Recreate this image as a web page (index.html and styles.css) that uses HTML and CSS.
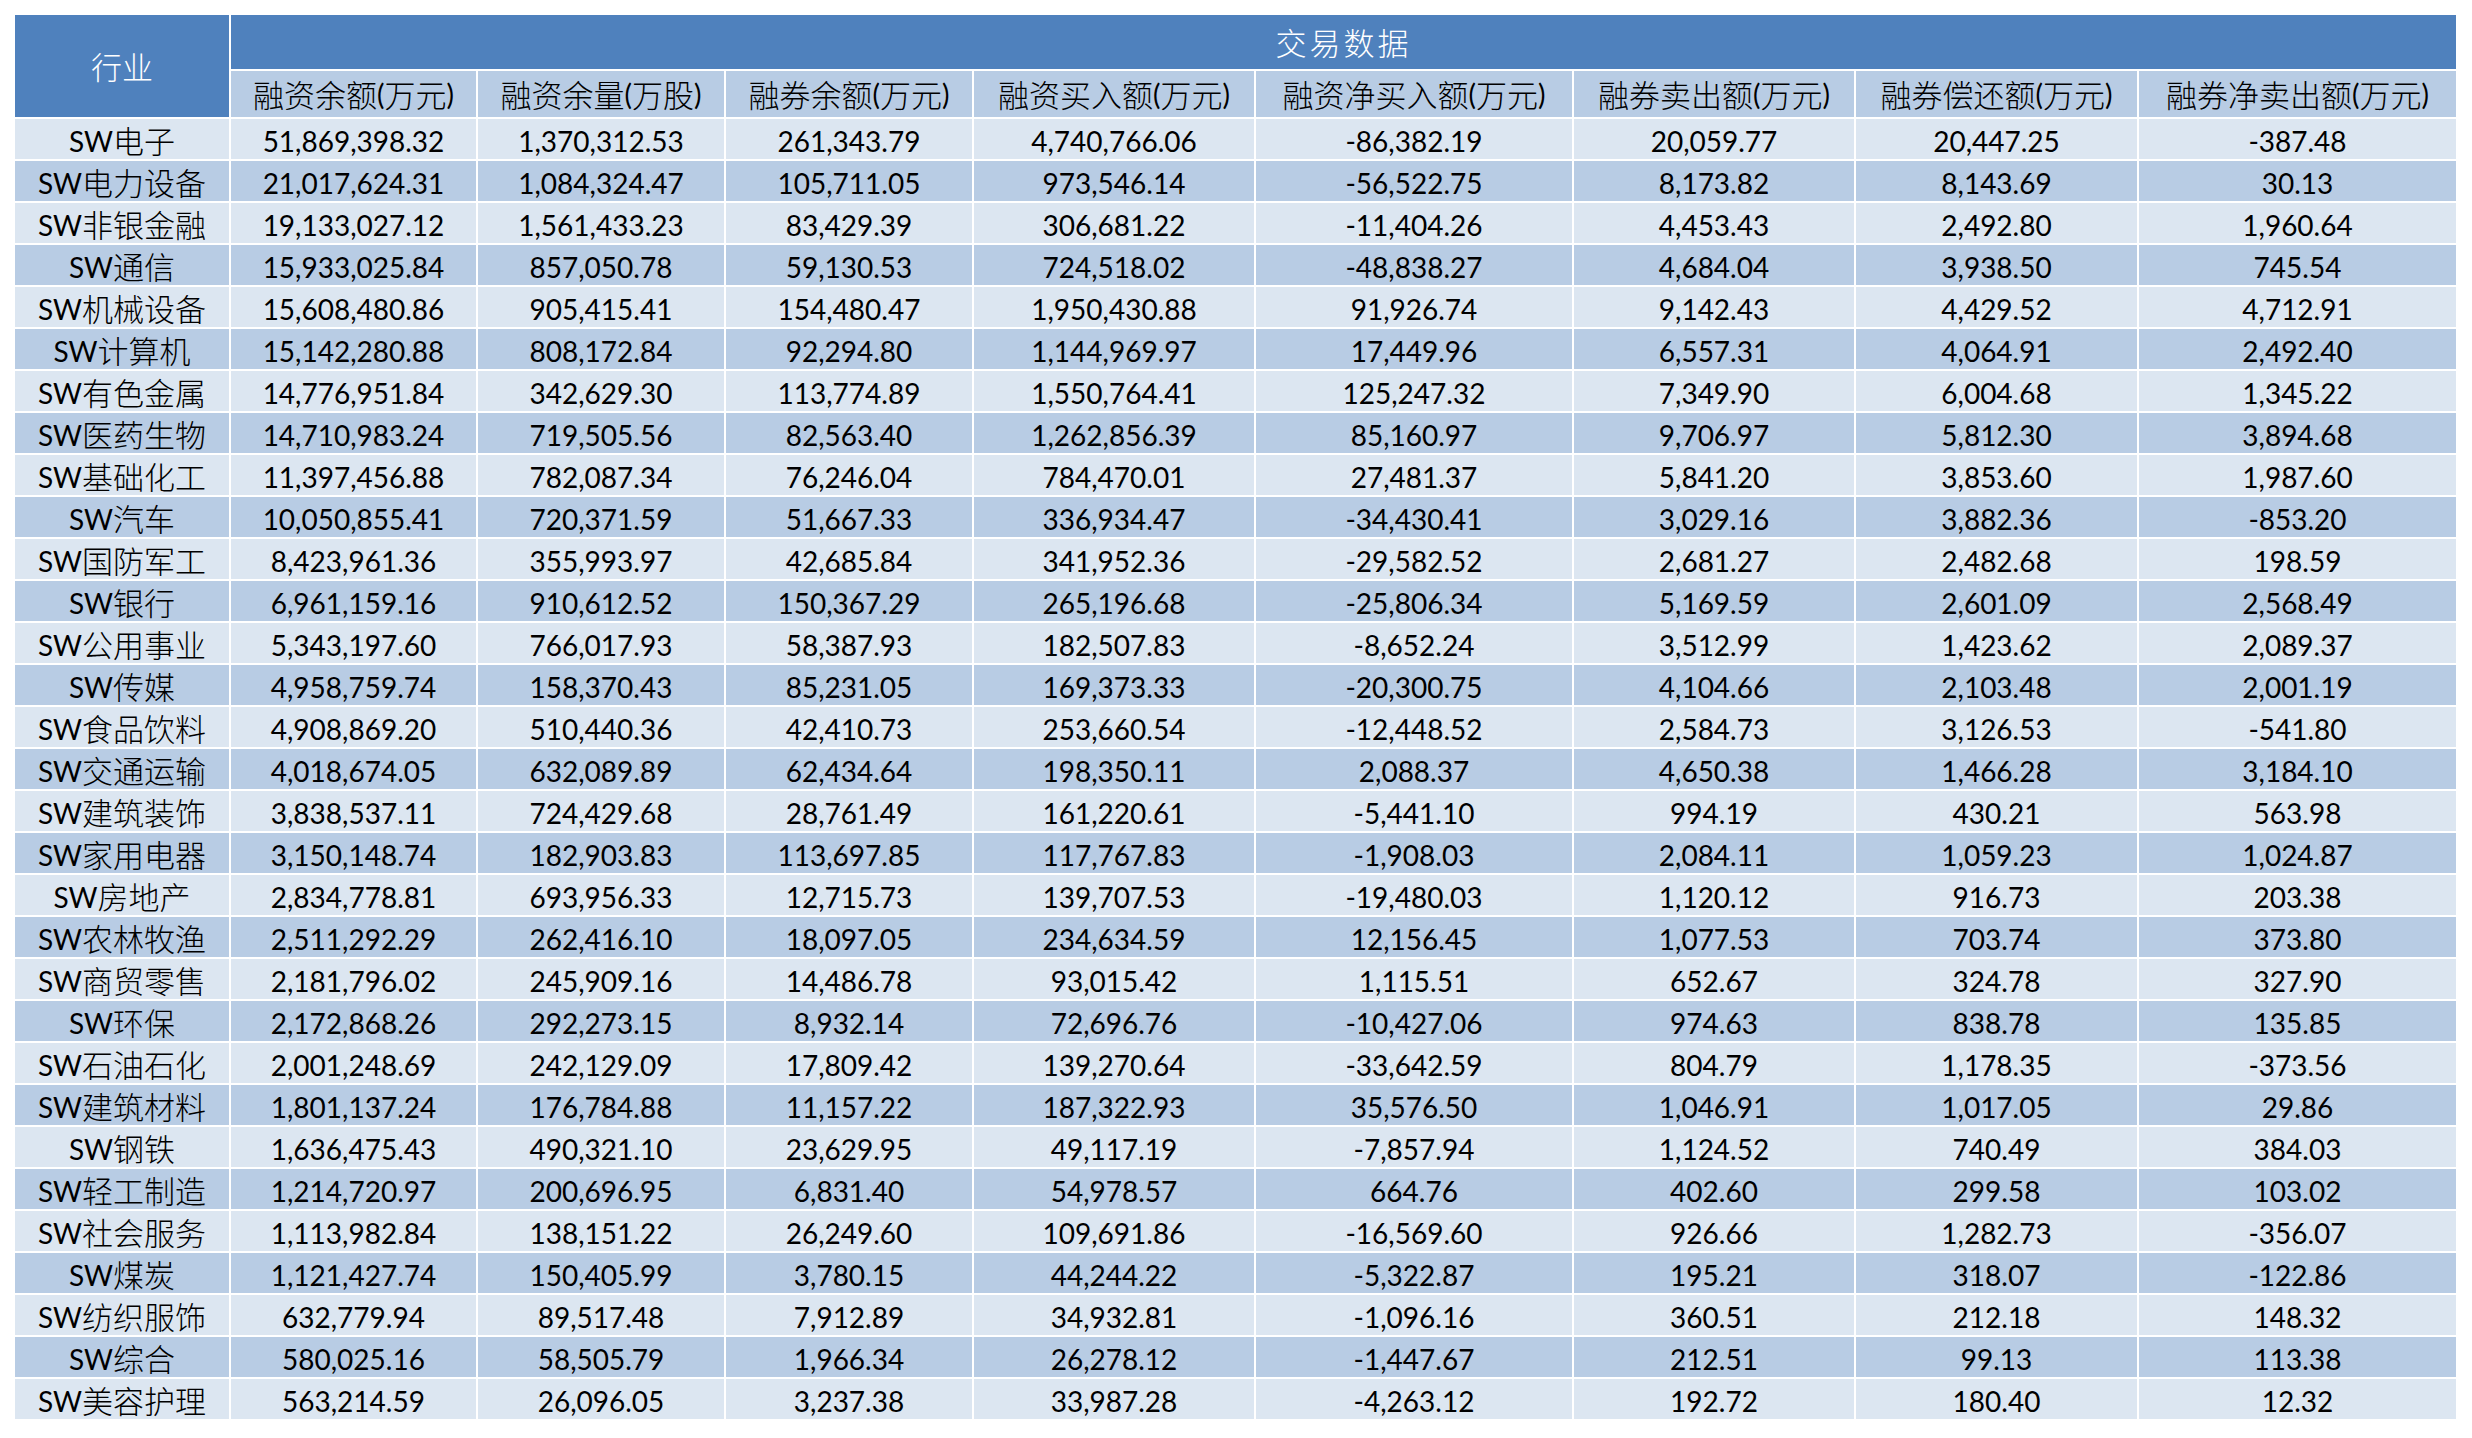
FILE: index.html
```html
<!DOCTYPE html>
<html lang="zh-CN">
<head>
<meta charset="utf-8">
<title>交易数据</title>
<link rel="stylesheet" href="styles.css">
</head>
<body>
<div class="sheet">
  <div class="head">
    <div class="c h-ind"><span class="zh">行业</span></div>
    <div class="c h-top"><span class="zh wide">交易数据</span></div>
    <div class="c h-col"><span class="zh">融资余额</span>(<span class="zh">万元</span>)</div>
    <div class="c h-col"><span class="zh">融资余量</span>(<span class="zh">万股</span>)</div>
    <div class="c h-col"><span class="zh">融券余额</span>(<span class="zh">万元</span>)</div>
    <div class="c h-col"><span class="zh">融资买入额</span>(<span class="zh">万元</span>)</div>
    <div class="c h-col"><span class="zh">融资净买入额</span>(<span class="zh">万元</span>)</div>
    <div class="c h-col"><span class="zh">融券卖出额</span>(<span class="zh">万元</span>)</div>
    <div class="c h-col"><span class="zh">融券偿还额</span>(<span class="zh">万元</span>)</div>
    <div class="c h-col"><span class="zh">融券净卖出额</span>(<span class="zh">万元</span>)</div>
  </div>
  <div class="row"><div class="c">SW<span class="zh">电子</span></div><div class="c">51,869,398.32</div><div class="c">1,370,312.53</div><div class="c">261,343.79</div><div class="c">4,740,766.06</div><div class="c">-86,382.19</div><div class="c">20,059.77</div><div class="c">20,447.25</div><div class="c">-387.48</div></div>
  <div class="row"><div class="c">SW<span class="zh">电力设备</span></div><div class="c">21,017,624.31</div><div class="c">1,084,324.47</div><div class="c">105,711.05</div><div class="c">973,546.14</div><div class="c">-56,522.75</div><div class="c">8,173.82</div><div class="c">8,143.69</div><div class="c">30.13</div></div>
  <div class="row"><div class="c">SW<span class="zh">非银金融</span></div><div class="c">19,133,027.12</div><div class="c">1,561,433.23</div><div class="c">83,429.39</div><div class="c">306,681.22</div><div class="c">-11,404.26</div><div class="c">4,453.43</div><div class="c">2,492.80</div><div class="c">1,960.64</div></div>
  <div class="row"><div class="c">SW<span class="zh">通信</span></div><div class="c">15,933,025.84</div><div class="c">857,050.78</div><div class="c">59,130.53</div><div class="c">724,518.02</div><div class="c">-48,838.27</div><div class="c">4,684.04</div><div class="c">3,938.50</div><div class="c">745.54</div></div>
  <div class="row"><div class="c">SW<span class="zh">机械设备</span></div><div class="c">15,608,480.86</div><div class="c">905,415.41</div><div class="c">154,480.47</div><div class="c">1,950,430.88</div><div class="c">91,926.74</div><div class="c">9,142.43</div><div class="c">4,429.52</div><div class="c">4,712.91</div></div>
  <div class="row"><div class="c">SW<span class="zh">计算机</span></div><div class="c">15,142,280.88</div><div class="c">808,172.84</div><div class="c">92,294.80</div><div class="c">1,144,969.97</div><div class="c">17,449.96</div><div class="c">6,557.31</div><div class="c">4,064.91</div><div class="c">2,492.40</div></div>
  <div class="row"><div class="c">SW<span class="zh">有色金属</span></div><div class="c">14,776,951.84</div><div class="c">342,629.30</div><div class="c">113,774.89</div><div class="c">1,550,764.41</div><div class="c">125,247.32</div><div class="c">7,349.90</div><div class="c">6,004.68</div><div class="c">1,345.22</div></div>
  <div class="row"><div class="c">SW<span class="zh">医药生物</span></div><div class="c">14,710,983.24</div><div class="c">719,505.56</div><div class="c">82,563.40</div><div class="c">1,262,856.39</div><div class="c">85,160.97</div><div class="c">9,706.97</div><div class="c">5,812.30</div><div class="c">3,894.68</div></div>
  <div class="row"><div class="c">SW<span class="zh">基础化工</span></div><div class="c">11,397,456.88</div><div class="c">782,087.34</div><div class="c">76,246.04</div><div class="c">784,470.01</div><div class="c">27,481.37</div><div class="c">5,841.20</div><div class="c">3,853.60</div><div class="c">1,987.60</div></div>
  <div class="row"><div class="c">SW<span class="zh">汽车</span></div><div class="c">10,050,855.41</div><div class="c">720,371.59</div><div class="c">51,667.33</div><div class="c">336,934.47</div><div class="c">-34,430.41</div><div class="c">3,029.16</div><div class="c">3,882.36</div><div class="c">-853.20</div></div>
  <div class="row"><div class="c">SW<span class="zh">国防军工</span></div><div class="c">8,423,961.36</div><div class="c">355,993.97</div><div class="c">42,685.84</div><div class="c">341,952.36</div><div class="c">-29,582.52</div><div class="c">2,681.27</div><div class="c">2,482.68</div><div class="c">198.59</div></div>
  <div class="row"><div class="c">SW<span class="zh">银行</span></div><div class="c">6,961,159.16</div><div class="c">910,612.52</div><div class="c">150,367.29</div><div class="c">265,196.68</div><div class="c">-25,806.34</div><div class="c">5,169.59</div><div class="c">2,601.09</div><div class="c">2,568.49</div></div>
  <div class="row"><div class="c">SW<span class="zh">公用事业</span></div><div class="c">5,343,197.60</div><div class="c">766,017.93</div><div class="c">58,387.93</div><div class="c">182,507.83</div><div class="c">-8,652.24</div><div class="c">3,512.99</div><div class="c">1,423.62</div><div class="c">2,089.37</div></div>
  <div class="row"><div class="c">SW<span class="zh">传媒</span></div><div class="c">4,958,759.74</div><div class="c">158,370.43</div><div class="c">85,231.05</div><div class="c">169,373.33</div><div class="c">-20,300.75</div><div class="c">4,104.66</div><div class="c">2,103.48</div><div class="c">2,001.19</div></div>
  <div class="row"><div class="c">SW<span class="zh">食品饮料</span></div><div class="c">4,908,869.20</div><div class="c">510,440.36</div><div class="c">42,410.73</div><div class="c">253,660.54</div><div class="c">-12,448.52</div><div class="c">2,584.73</div><div class="c">3,126.53</div><div class="c">-541.80</div></div>
  <div class="row"><div class="c">SW<span class="zh">交通运输</span></div><div class="c">4,018,674.05</div><div class="c">632,089.89</div><div class="c">62,434.64</div><div class="c">198,350.11</div><div class="c">2,088.37</div><div class="c">4,650.38</div><div class="c">1,466.28</div><div class="c">3,184.10</div></div>
  <div class="row"><div class="c">SW<span class="zh">建筑装饰</span></div><div class="c">3,838,537.11</div><div class="c">724,429.68</div><div class="c">28,761.49</div><div class="c">161,220.61</div><div class="c">-5,441.10</div><div class="c">994.19</div><div class="c">430.21</div><div class="c">563.98</div></div>
  <div class="row"><div class="c">SW<span class="zh">家用电器</span></div><div class="c">3,150,148.74</div><div class="c">182,903.83</div><div class="c">113,697.85</div><div class="c">117,767.83</div><div class="c">-1,908.03</div><div class="c">2,084.11</div><div class="c">1,059.23</div><div class="c">1,024.87</div></div>
  <div class="row"><div class="c">SW<span class="zh">房地产</span></div><div class="c">2,834,778.81</div><div class="c">693,956.33</div><div class="c">12,715.73</div><div class="c">139,707.53</div><div class="c">-19,480.03</div><div class="c">1,120.12</div><div class="c">916.73</div><div class="c">203.38</div></div>
  <div class="row"><div class="c">SW<span class="zh">农林牧渔</span></div><div class="c">2,511,292.29</div><div class="c">262,416.10</div><div class="c">18,097.05</div><div class="c">234,634.59</div><div class="c">12,156.45</div><div class="c">1,077.53</div><div class="c">703.74</div><div class="c">373.80</div></div>
  <div class="row"><div class="c">SW<span class="zh">商贸零售</span></div><div class="c">2,181,796.02</div><div class="c">245,909.16</div><div class="c">14,486.78</div><div class="c">93,015.42</div><div class="c">1,115.51</div><div class="c">652.67</div><div class="c">324.78</div><div class="c">327.90</div></div>
  <div class="row"><div class="c">SW<span class="zh">环保</span></div><div class="c">2,172,868.26</div><div class="c">292,273.15</div><div class="c">8,932.14</div><div class="c">72,696.76</div><div class="c">-10,427.06</div><div class="c">974.63</div><div class="c">838.78</div><div class="c">135.85</div></div>
  <div class="row"><div class="c">SW<span class="zh">石油石化</span></div><div class="c">2,001,248.69</div><div class="c">242,129.09</div><div class="c">17,809.42</div><div class="c">139,270.64</div><div class="c">-33,642.59</div><div class="c">804.79</div><div class="c">1,178.35</div><div class="c">-373.56</div></div>
  <div class="row"><div class="c">SW<span class="zh">建筑材料</span></div><div class="c">1,801,137.24</div><div class="c">176,784.88</div><div class="c">11,157.22</div><div class="c">187,322.93</div><div class="c">35,576.50</div><div class="c">1,046.91</div><div class="c">1,017.05</div><div class="c">29.86</div></div>
  <div class="row"><div class="c">SW<span class="zh">钢铁</span></div><div class="c">1,636,475.43</div><div class="c">490,321.10</div><div class="c">23,629.95</div><div class="c">49,117.19</div><div class="c">-7,857.94</div><div class="c">1,124.52</div><div class="c">740.49</div><div class="c">384.03</div></div>
  <div class="row"><div class="c">SW<span class="zh">轻工制造</span></div><div class="c">1,214,720.97</div><div class="c">200,696.95</div><div class="c">6,831.40</div><div class="c">54,978.57</div><div class="c">664.76</div><div class="c">402.60</div><div class="c">299.58</div><div class="c">103.02</div></div>
  <div class="row"><div class="c">SW<span class="zh">社会服务</span></div><div class="c">1,113,982.84</div><div class="c">138,151.22</div><div class="c">26,249.60</div><div class="c">109,691.86</div><div class="c">-16,569.60</div><div class="c">926.66</div><div class="c">1,282.73</div><div class="c">-356.07</div></div>
  <div class="row"><div class="c">SW<span class="zh">煤炭</span></div><div class="c">1,121,427.74</div><div class="c">150,405.99</div><div class="c">3,780.15</div><div class="c">44,244.22</div><div class="c">-5,322.87</div><div class="c">195.21</div><div class="c">318.07</div><div class="c">-122.86</div></div>
  <div class="row"><div class="c">SW<span class="zh">纺织服饰</span></div><div class="c">632,779.94</div><div class="c">89,517.48</div><div class="c">7,912.89</div><div class="c">34,932.81</div><div class="c">-1,096.16</div><div class="c">360.51</div><div class="c">212.18</div><div class="c">148.32</div></div>
  <div class="row"><div class="c">SW<span class="zh">综合</span></div><div class="c">580,025.16</div><div class="c">58,505.79</div><div class="c">1,966.34</div><div class="c">26,278.12</div><div class="c">-1,447.67</div><div class="c">212.51</div><div class="c">99.13</div><div class="c">113.38</div></div>
  <div class="row"><div class="c">SW<span class="zh">美容护理</span></div><div class="c">563,214.59</div><div class="c">26,096.05</div><div class="c">3,237.38</div><div class="c">33,987.28</div><div class="c">-4,263.12</div><div class="c">192.72</div><div class="c">180.40</div><div class="c">12.32</div></div>
</div>
</body>
</html>
```
FILE: styles.css
```css
html, body {
  margin: 0;
  padding: 0;
  background: #ffffff;
}

.sheet {
  display: grid;
  grid-template-columns: 214px 245px 246px 246px 280px 316px 280px 281px 317px;
  grid-template-rows: 54px 46px repeat(31, 40px);
  gap: 2px;
  margin: 15px 0 0 15px;
  width: max-content;
  font-family: "Lato", "Noto Sans CJK SC", sans-serif;
  font-size: 28px;
  color: #000000;
}

.head,
.row {
  display: contents;
}

.c {
  display: flex;
  align-items: center;
  justify-content: center;
  white-space: nowrap;
  padding-top: 3px;
  box-sizing: border-box;
  line-height: 1;
}

.zh {
  font-family: "Noto Sans CJK SC", sans-serif;
  font-size: 31px;
  font-weight: 300;
  line-height: 1;
  position: relative;
  top: -1px;
}

.h-ind {
  grid-row: 1 / 3;
  grid-column: 1;
  background: #4f81bd;
  color: #ffffff;
  padding-top: 0;
}

.h-top {
  grid-row: 1;
  grid-column: 2 / 10;
  background: #4f81bd;
  color: #ffffff;
  padding-top: 0;
}

.h-top .wide {
  letter-spacing: 3px;
}

.h-col {
  background: #b8cce4;
  padding-top: 0;
}

.row:nth-child(even) > .c {
  background: #dce6f1;
}

.row:nth-child(odd) > .c {
  background: #b8cce4;
}
```
